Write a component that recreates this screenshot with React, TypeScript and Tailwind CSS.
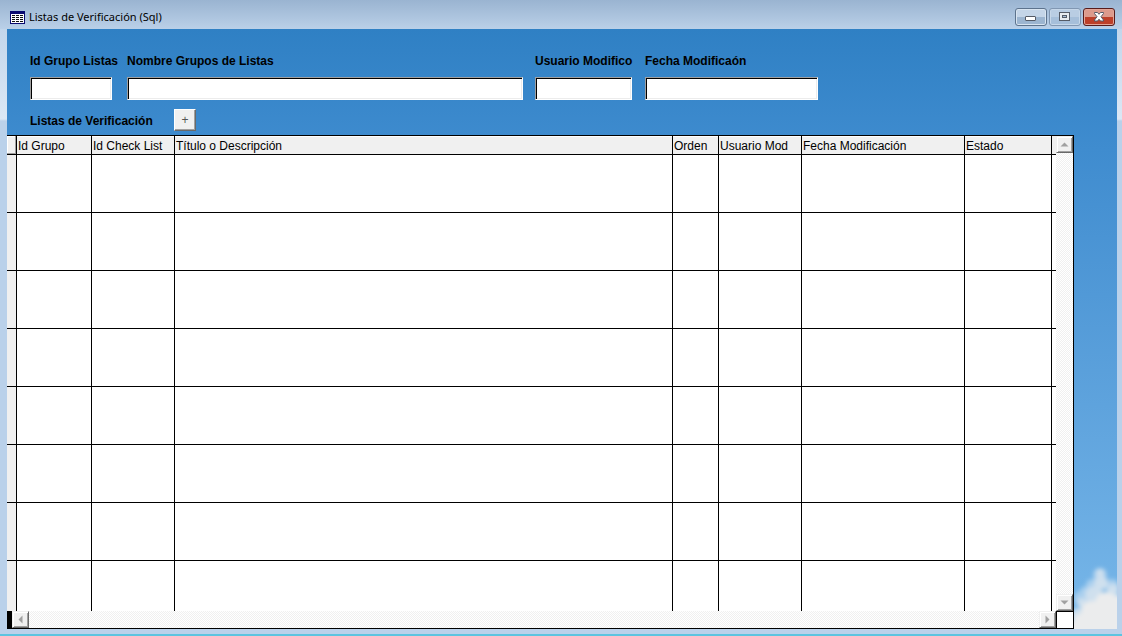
import { ReactNode } from "react";

interface Column {
  title: string;
  width: string;
}

const columns: Column[] = [
  { title: "Id Grupo", width: "w-[75px]" },
  { title: "Id Check List", width: "w-[83px]" },
  { title: "Título o Descripción", width: "" },
  { title: "Orden", width: "w-[46px]" },
  { title: "Usuario Mod", width: "w-[83px]" },
  { title: "Fecha Modificación", width: "w-[163px]" },
  { title: "Estado", width: "w-[87px]" },
];

const rows = [0, 1, 2, 3, 4, 5, 6, 7];

function TableIcon() {
  return (
    <svg width="15" height="13" viewBox="0 0 15 13" shapeRendering="crispEdges" aria-hidden="true">
      <rect width="15" height="13" fill="#0a0a70" />
      <rect x="1" y="3" width="13" height="9" fill="#111" />
      <path d="M1 3.5h13M1 5.5h13M1 7.5h13M1 9.5h13M1 11.5h13" stroke="#fff" />
      <path d="M1.5 3v9M5.5 3v9M9.5 3v9M13.5 3v9" stroke="#fff" />
    </svg>
  );
}

function WindowControls() {
  return (
    <div className="flex gap-0.5">
      <button type="button" aria-label="Minimizar" className="flex h-[18px] w-8 items-center justify-center rounded-[3px] border border-[#5d738d] bg-linear-to-b from-[#c4d5e8] from-50% to-[#9cb5d0] to-50% shadow-[inset_0_0_0_1px_#d8e4f0]">
        <svg width="12" height="12" viewBox="0 0 12 12" aria-hidden="true">
          <rect x="0.5" y="5.5" width="10" height="4" rx="0.5" fill="#fff" stroke="#555b66" />
        </svg>
      </button>
      <button type="button" aria-label="Maximizar" className="flex h-[18px] w-8 items-center justify-center rounded-[3px] border border-[#8197b2] bg-linear-to-b from-[#b9cde3] from-50% to-[#a6bfda] to-50% shadow-[inset_0_0_0_1px_#c6d7e9]">
        <svg width="12" height="10" viewBox="0 0 12 10" aria-hidden="true">
          <rect x="0.5" y="0.5" width="10" height="8" fill="#e8ecf0" stroke="#555b66" />
          <rect x="3.5" y="3.5" width="4" height="2" fill="#a9bfd8" stroke="#555b66" />
        </svg>
      </button>
      <button type="button" aria-label="Cerrar" className="flex h-[18px] w-8 items-center justify-center rounded-[3px] border border-[#571c1c] bg-linear-to-b from-[#dc9a8c] from-50% to-[#bd3f29] to-50% shadow-[inset_0_0_0_1px_#e3a698]">
        <svg width="12" height="10" viewBox="0 0 12 10" aria-hidden="true">
          <path d="M1.5 0.5h3l1.5 1.8 1.5-1.8h3v1L8 4.7l2.5 3.3v1h-3L6 7.2 4.5 9h-3V8L4 4.7 1.5 1.5z" fill="#fff" stroke="#565b68" />
        </svg>
      </button>
    </div>
  );
}

interface FieldProps {
  id: string;
  label: string;
  width: string;
  gap: string;
}

function Field({ id, label, width, gap }: FieldProps) {
  return (
    <div className={`flex flex-col ${width} ${gap}`}>
      <label htmlFor={id} className="mb-2 text-xs font-bold whitespace-nowrap">
        {label}
      </label>
      <input
        id={id}
        type="text"
        className="h-[23px] w-full border border-t-[#a0a0a0] border-r-white border-b-white border-l-[#a0a0a0] bg-white px-1 shadow-[inset_1px_1px_0_#000,inset_-1px_-1px_0_#ececec] outline-none"
      />
    </div>
  );
}

function ScrollButton({ label, path }: { label: string; path: string }) {
  return (
    <button
      type="button"
      aria-label={label}
      className="flex size-[17px] shrink-0 items-center justify-center border border-t-[#f0f0f0] border-r-[#696969] border-b-[#696969] border-l-[#f0f0f0] bg-[#f0f0f0] shadow-[inset_1px_1px_0_#fff,inset_-1px_-1px_0_#a0a0a0]"
    >
      <svg width="9" height="9" viewBox="0 0 9 9" aria-hidden="true">
        <path d={path} fill="#a0a0a0" />
      </svg>
    </button>
  );
}

function Track({ children, className }: { children: ReactNode; className: string }) {
  return (
    <div className={`flex justify-between bg-[repeating-conic-gradient(#f0f0f0_0_25%,#fff_0_50%)] bg-size-[2px_2px] ${className}`}>
      {children}
    </div>
  );
}

function Clouds() {
  return (
    <svg className="absolute right-0 bottom-0" width="44" height="70" viewBox="0 0 44 70" aria-hidden="true">
      <defs>
        <filter id="soft" x="-40%" y="-40%" width="180%" height="180%">
          <feGaussianBlur stdDeviation="2" />
        </filter>
      </defs>
      <g filter="url(#soft)">
        <g fill="#a9cfee">
          <circle cx="27" cy="16" r="7" />
          <circle cx="19" cy="26" r="6" />
          <circle cx="39" cy="27" r="7" />
          <circle cx="8" cy="39" r="7" />
          <circle cx="14" cy="35" r="8" />
        </g>
        <g fill="#cfe0ee">
          <circle cx="27" cy="14" r="4" />
          <circle cx="28" cy="24" r="7" />
          <circle cx="40" cy="31" r="6" />
          <circle cx="21" cy="36" r="9" />
          <circle cx="9" cy="44" r="5" />
          <circle cx="5" cy="56" r="7" />
        </g>
        <g fill="#ebeced">
          <circle cx="33" cy="44" r="11" />
          <circle cx="18" cy="52" r="10" />
          <circle cx="44" cy="42" r="6" />
          <circle cx="8" cy="63" r="8" />
          <path d="M-4 84V64l10-6 12-10 34-6v42z" />
        </g>
      </g>
    </svg>
  );
}

export default function App() {
  return (
    <div className="flex h-screen flex-col border-b-2 border-[#5cc4e0] bg-linear-to-b from-[#bad0e8] via-[#dce8f5] via-[119px] to-[#bad1ea] to-[121px] font-['Liberation_Sans',Arial,sans-serif] text-xs text-black">
      <header className="flex h-[29px] shrink-0 items-center justify-between bg-linear-to-b from-[#9ab4d1] to-[#bad0e8] pt-1 pr-[7px] pl-2.5">
        <h1 className="flex items-center gap-1 pt-0.5 font-['Noto_Sans',sans-serif] text-[11px]">
          <TableIcon />
          Listas de Verificación (Sql)
        </h1>
        <WindowControls />
      </header>

      <main className="relative mr-[5px] mb-[5px] ml-[7px] flex min-h-0 flex-1 flex-col bg-linear-to-b from-[#2f80c4] via-[#3f8ccf] via-20% to-[#78b7e9]">
        <Clouds />
        <form className="h-[106px] shrink-0 pt-6 pl-[23px]">
          <div className="flex">
            <Field id="id-grupo" label="Id Grupo Listas" width="w-[82px]" gap="mr-[15px]" />
            <Field id="nombre-grupo" label="Nombre Grupos de Listas" width="w-[396px]" gap="mr-3" />
            <Field id="usuario" label="Usuario Modifico" width="w-[97px]" gap="mr-[13px]" />
            <Field id="fecha" label="Fecha Modificaón" width="w-[173px]" gap="" />
          </div>
          <div className="mt-[9px] flex items-center">
            <h2 className="w-36 pt-0.5 font-bold">Listas de Verificación</h2>
            <button type="button" aria-label="Agregar" className="size-[22px] border border-t-white border-r-[#696969] border-b-[#696969] border-l-white bg-[#f0f0f0] text-xs leading-none text-[#555] shadow-[inset_-1px_-1px_0_#a0a0a0]">
              +
            </button>
          </div>
        </form>

        <section className="relative mr-[43px] flex min-h-0 flex-1 flex-col border-y border-r border-black bg-white">
          <div className="flex min-h-0 flex-1">
            <div className="min-w-0 flex-1 overflow-hidden">
              <table className="w-full table-fixed border-separate border-spacing-0">
                <thead>
                  <tr className="h-[19px] bg-[#f0f0f0] text-left">
                    <td className="w-2.5 border-r border-b border-black p-0 shadow-[inset_-1px_-1px_0_#a0a0a0,inset_1px_1px_0_#fff]" />
                    {columns.map((column) => (
                      <th key={column.title} scope="col" className={`border-r border-b border-black p-0 pt-0.5 pl-px leading-4 font-normal whitespace-nowrap shadow-[inset_0_1px_0_#fff] ${column.width}`}>
                        {column.title}
                      </th>
                    ))}
                    <td className="w-1 border-b border-black p-0" />
                  </tr>
                </thead>
                <tbody>
                  {rows.map((row) => (
                    <tr key={row} className="h-[58px]">
                      <td className="border-r border-b border-black bg-[#f0f0f0] p-0" />
                      {columns.map((column) => (
                        <td key={column.title} className="border-r border-b border-black p-0" />
                      ))}
                      <td className="border-b border-black p-0" />
                    </tr>
                  ))}
                </tbody>
              </table>
            </div>
            <Track className="w-[17px] shrink-0 flex-col">
              <ScrollButton label="Subir" path="M0.5 6.5L4.5 2.5L8.5 6.5Z" />
              <ScrollButton label="Bajar" path="M0.5 2.5L4.5 6.5L8.5 2.5Z" />
            </Track>
          </div>
          <div className="flex h-[17px] shrink-0">
            <div className="w-[5px] bg-black" />
            <Track className="flex-1">
              <ScrollButton label="Izquierda" path="M6.5 0.5L2.5 4.5L6.5 8.5Z" />
              <ScrollButton label="Derecha" path="M2.5 0.5L6.5 4.5L2.5 8.5Z" />
            </Track>
            <div className="w-[17px] border-l border-t border-black" />
          </div>
        </section>
      </main>
    </div>
  );
}
